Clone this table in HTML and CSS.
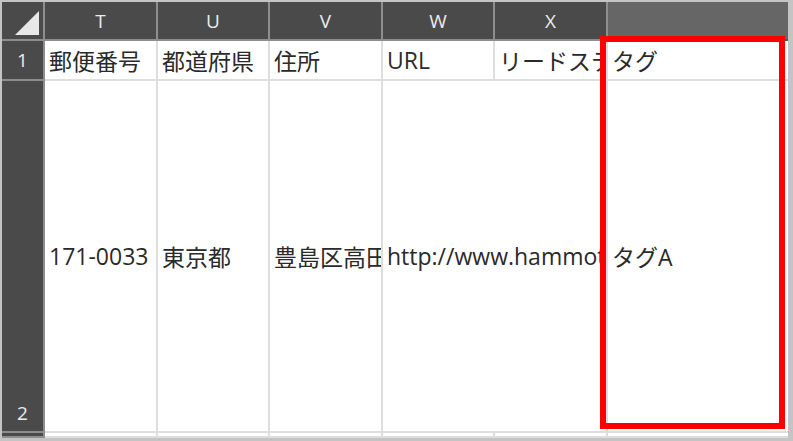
FILE: index.html
```html
<!DOCTYPE html>
<html lang="ja">
<head>
  <meta charset="UTF-8" />
  <title>Sheet</title>
  <link rel="stylesheet" href="styles.css">
</head>
<body>
  <div class="sheet">
    <div class="grid">
      <!-- column headers -->
      <div class="corner">
        <svg width="24" height="24" viewBox="0 0 24 24"><polygon points="0,24 24,24 24,0" fill="#e8e8e8"/></svg>
      </div>
      <div class="colhead">T</div>
      <div class="colhead">U</div>
      <div class="colhead">V</div>
      <div class="colhead">W</div>
      <div class="colhead">X</div>
      <div class="colhead active"></div>

      <!-- row 1 -->
      <div class="rowhead">1</div>
      <div class="cell">郵便番号</div>
      <div class="cell">都道府県</div>
      <div class="cell">住所</div>
      <div class="cell">URL</div>
      <div class="cell">リードステータス</div>
      <div class="cell last">タグ</div>

      <!-- row 2: URL spills over the empty X cell -->
      <div class="rowhead bottom">2</div>
      <div class="cell">171-0033</div>
      <div class="cell">東京都</div>
      <div class="cell">豊島区高田</div>
      <div class="cell span2">http://www.hammoto.jp</div>
      <div class="cell last">タグA</div>

      <!-- row 3 (cut off) -->
      <div class="rowhead"></div>
      <div class="cell"></div>
      <div class="cell"></div>
      <div class="cell"></div>
      <div class="cell"></div>
      <div class="cell"></div>
      <div class="cell last"></div>
    </div>

    <div class="highlight"></div>
  </div>
</body>
</html>
```

FILE: styles.css
```css
:root {
  --frame: #c4c4c4;
  --head: #4a4a4a;
  --head-line: #8e8e8e;
  --grid-line: #dedede;
  --text: #2a2a2a;
}

* {
  box-sizing: border-box;
}

body, html {
  margin: 0;
  height: 100%;
  background: var(--frame);
  overflow: hidden;
}

.sheet {
  position: relative;
  margin: 2px 5px 3px 2px;
  height: 436px;
  background: #fff;
  overflow: hidden;
}

.grid {
  display: grid;
  grid-template-columns: 43px 113px 112px 113px 112px 113px 1fr;
  grid-template-rows: 39px 40px 352px 1fr;
  height: 100%;
}

.corner,
.colhead,
.rowhead {
  background: var(--head);
  border-right: 2px solid var(--head-line);
  border-bottom: 2px solid var(--head-line);
  color: #ececec;
  font-family: "Open Sans", "Noto Sans", sans-serif;
  font-size: 19px;
  display: flex;
  align-items: center;
  justify-content: center;
}

.corner {
  align-items: flex-end;
  justify-content: flex-end;
  padding: 0 4px 4px 0;
}

.colhead.active {
  background: #666;
  border-right: none;
  border-bottom: 2px solid #217346;
}

.rowhead.bottom {
  align-items: flex-end;
  padding-bottom: 5px;
}

.cell {
  border-right: 2px solid var(--grid-line);
  border-bottom: 2px solid var(--grid-line);
  padding: 0 4px;
  display: flex;
  align-items: center;
  white-space: nowrap;
  overflow: hidden;
  color: var(--text);
  font-family: "Open Sans", "Noto Sans CJK JP", sans-serif;
  font-size: 23px;
}

.cell.span2 {
  grid-column: span 2;
}

.cell.last {
  border-right: none;
}

.highlight {
  position: absolute;
  left: 598px;
  top: 34px;
  width: 185px;
  height: 393px;
  border: 6px solid #ff0000;
}
```
